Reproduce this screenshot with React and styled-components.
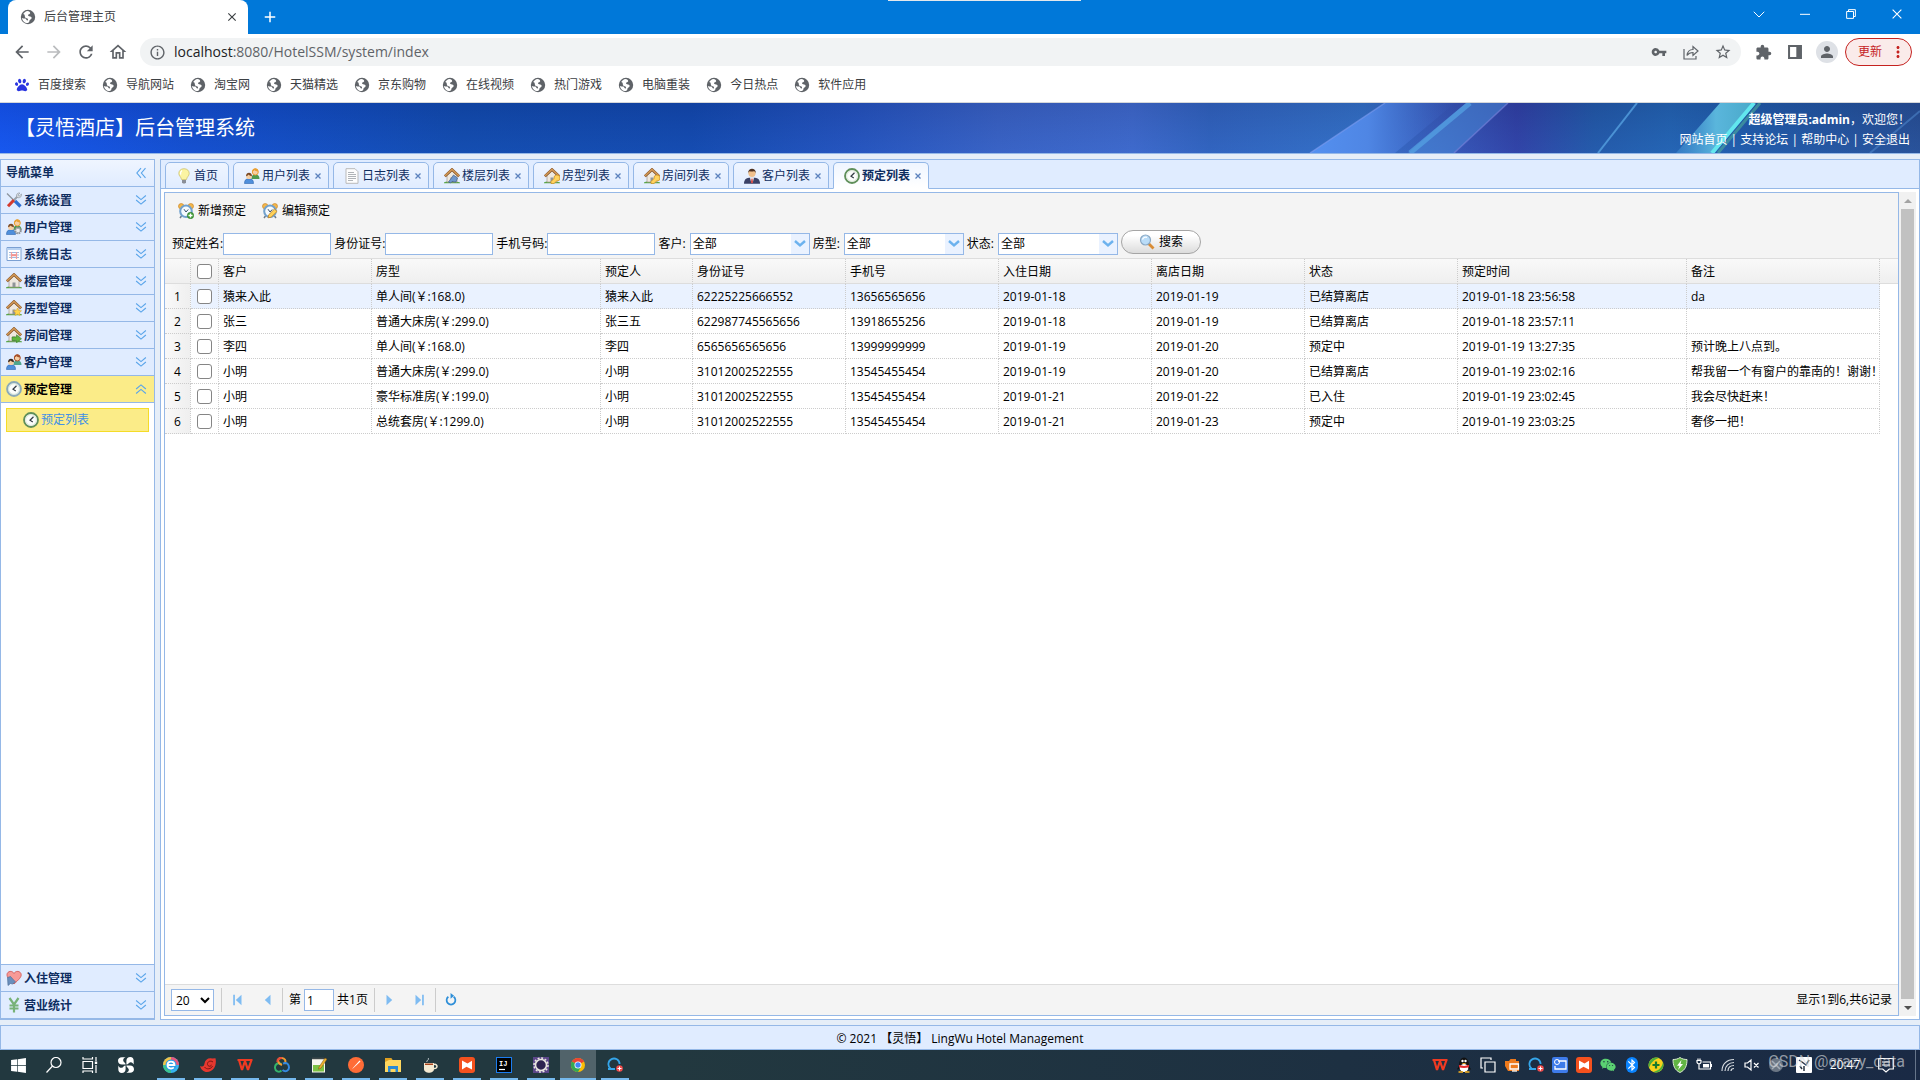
import React, { useState } from 'react';
import styled, { createGlobalStyle } from 'styled-components';
import {
  MdArrowBack, MdArrowForward, MdRefresh, MdOutlineHome, MdInfoOutline, MdVpnKey,
  MdStarBorder, MdExtension, MdPerson, MdMoreVert, MdBluetooth, MdAdd, MdClose
} from 'react-icons/md';
import { FaWindows, FaPaw, FaWeixin } from 'react-icons/fa';

const line = '#95b8e7'
const sky = '#e0ecff'

const GlobalStyle = createGlobalStyle`
  * {
    box-sizing: border-box;
  }
  body {
    margin: 0;
    background: #e6eef8;
    color: #000;
    font: 12px/16px 'Open Sans', 'Noto Sans CJK SC', sans-serif;
  }
  button, input, select {
    margin: 0;
    padding: 0;
    border: 0;
    background: none;
    color: inherit;
    font: inherit;
  }
  a {
    color: inherit;
    text-decoration: none;
  }
  svg {
    display: block;
    flex: none;
  }
`

const Page = styled.div`
  display: flex;
  flex-direction: column;
  min-height: 100vh;
  overflow: hidden;
`

/* browser window */
const TitleBar = styled.div`
  position: relative;
  display: flex;
  height: 34px;
  padding-left: 8px;
  background: #0078d9;
  color: #fff;
`
const DragHandle = styled.div`
  position: absolute;
  top: 0;
  left: 888px;
  width: 193px;
  height: 1px;
  background: #e4e8ec;
`
const BrowserTab = styled.div`
  display: flex;
  align-items: center;
  gap: 8px;
  width: 240px;
  padding: 0 8px 6px 12px;
  height: 40px;
  border-radius: 8px 8px 0 0;
  background: #fff;
  color: #3c4043;
`
const TabTitle = styled.span`
  flex: 1;
`
const IconButton = styled.button`
  display: flex;
  align-items: center;
  justify-content: center;
  width: ${props => props.$size || 16}px;
  height: ${props => props.$size || 16}px;
  color: ${props => props.$color || 'inherit'};
`
const NewTab = styled(IconButton)`
  margin: 5px 0 0 10px;
`
const WindowButtons = styled.div`
  display: flex;
  margin-left: auto;
`
const WindowButton = styled.button`
  display: flex;
  align-items: center;
  justify-content: center;
  width: 46px;
  height: 28px;
`
const AddressRow = styled.div`
  position: relative;
  display: flex;
  align-items: center;
  height: 36px;
  padding: 0 8px 0 6px;
  background: #fff;
  color: #5f6368;
`
const NavButtons = styled.div`
  display: flex;
  width: 134px;
`
const Omnibox = styled.div`
  display: flex;
  flex: 1;
  align-items: center;
  gap: 8px;
  height: 28px;
  padding: 0 6px 0 9px;
  border-radius: 14px;
  background: #f1f3f4;
`
const Url = styled.div`
  flex: 1;
  font-size: 14px;
  line-height: 20px;

  b {
    color: #202124;
    font-weight: 400;
  }
`
const BrowserTools = styled.div`
  display: flex;
  align-items: center;
  gap: 10px;
  padding: 0 7px 0 11px;
`
const Avatar = styled(IconButton)`
  border-radius: 50%;
  background: #dee1e6;
`
const UpdateButton = styled.button`
  display: flex;
  align-items: center;
  justify-content: space-between;
  width: 67px;
  height: 28px;
  padding: 0 4px 0 12px;
  border: 1px solid #c5221f;
  border-radius: 14px;
  background: #faebea;
  color: #c5221f;
`
const Bookmarks = styled.nav`
  display: flex;
  gap: 16px;
  height: 33px;
  padding: 6px 14px 0;
  border-bottom: 1px solid #d5d7da;
  background: #fff;
  color: #3c4043;
`
const Bookmark = styled.a`
  display: flex;
  align-items: center;
  gap: 8px;
  height: 18px;
`

/* banner */
const Banner = styled.header`
  position: relative;
  display: flex;
  align-items: center;
  justify-content: space-between;
  height: 51px;
  padding: 0 10px 0 15px;
  border-bottom: 1px solid ${line};
  background: #1448b8;
  color: #fff;
`
const BannerArt = styled.svg`
  position: absolute;
  inset: 0;
  width: 100%;
  height: 100%;
`
const SiteTitle = styled.h1`
  position: relative;
  margin: 0;
  font-size: 20px;
  font-weight: 400;
  line-height: 28px;
`
const UserBox = styled.div`
  position: relative;
  padding-top: 4px;
  line-height: 20px;
  text-align: right;
`

/* layout */
const Main = styled.main`
  display: flex;
  flex: 1;
  gap: 5px;
  padding: 5px 0;
`
const Sidebar = styled.aside`
  display: flex;
  flex-direction: column;
  width: 155px;
  border: 1px solid ${line};
  background: #fff;
`
const PanelTitle = styled.div`
  display: flex;
  align-items: center;
  justify-content: space-between;
  height: 27px;
  padding: 0 7px 0 5px;
  border-bottom: 1px solid ${line};
  background: linear-gradient(#eff5ff, ${sky});
  color: #0e2d5f;
  font-weight: 700;
`
const MenuHead = styled.button`
  display: flex;
  align-items: center;
  gap: 2px;
  height: 27px;
  padding: 0 7px 0 5px;
  border-bottom: 1px solid ${line};
  background: ${props => props.$open ? '#fbec88' : sky};
  color: ${props => props.$open ? '#000' : '#0e2d5f'};
  font-weight: 700;
  text-align: left;
`
const MenuTitle = styled.span`
  flex: 1;
  padding-top: 2px;
`
const MenuBody = styled.div`
  flex: 1;
  padding: 5px;
  border-bottom: 1px solid ${line};
`
const MenuLink = styled.a`
  display: flex;
  align-items: center;
  gap: 2px;
  height: 24px;
  padding-left: 16px;
  border: 1px solid #f5dc28;
  background: #fbec88;
  color: #4291e6;
`
const Center = styled.section`
  display: flex;
  flex: 1;
  flex-direction: column;
  min-width: 0;
  border: 1px solid ${line};
  background: #fff;
`
const TabStrip = styled.div`
  display: flex;
  gap: 4px;
  height: 29px;
  padding: 2px 4px 0;
  border-bottom: 1px solid ${line};
  background: ${sky};
`
const Tab = styled.div`
  display: flex;
  align-items: center;
  height: 27px;
  padding: 0 ${props => props.$closable ? 2 : 10}px 0 10px;
  border: 1px solid ${line};
  border-bottom-color: ${props => props.$active ? '#fff' : line};
  border-radius: 5px 5px 0 0;
  background: linear-gradient(#eff5ff, ${props => props.$active ? '#fff' : sky});
  color: #0e2d5f;
  font-weight: ${props => props.$active ? 700 : 400};
`
const TabButton = styled.button`
  display: flex;
  align-items: center;
  gap: 2px;
`
const TabBody = styled.div`
  display: flex;
  flex: 1;
  padding: 3px;
`
const DataPanel = styled.div`
  display: flex;
  flex: 1;
  flex-direction: column;
  min-width: 0;
  border: 1px solid ${line};
`
const Toolbar = styled.div`
  height: 66px;
  border-bottom: 1px solid #ddd;
  background: #f4f4f4;
`
const ActionRow = styled.div`
  display: flex;
  gap: 16px;
  padding: 10px 13px 0;
`
const ActionButton = styled.button`
  display: flex;
  align-items: center;
  gap: 4px;
`
const Filters = styled.form`
  display: flex;
  align-items: flex-end;
  gap: 3px;
  height: 36px;
  padding: 0 7px;
`
const Field = styled.label`
  display: flex;
  align-items: center;
  gap: ${props => props.$gap || 0}px;
`
const TextBox = styled.input`
  width: ${props => props.$width || 108}px;
  height: 22px;
  padding: 0 2px;
  border: 1px solid ${line};
  background: #fff;
`
const ComboWrap = styled.span`
  position: relative;
  display: block;
`
const Combo = styled.select`
  display: block;
  width: 120px;
  height: 22px;
  padding: 0 20px 0 2px;
  border: 1px solid ${line};
  border-radius: 0;
  background: linear-gradient(90deg, #fff 100px, #eaf2ff 100px);
  appearance: none;
`
const ComboArrow = styled.svg`
  position: absolute;
  top: 6px;
  right: 4px;
  pointer-events: none;
`
const SearchButton = styled.button`
  display: flex;
  align-items: center;
  gap: 4px;
  height: 24px;
  margin-bottom: 1px;
  padding: 0 17px;
  border: 1px solid #a5a5a5;
  border-radius: 12px;
  background: linear-gradient(#fff 20%, #dcdcdc);
`
const GridArea = styled.div`
  flex: 1;
  overflow: hidden;
`
const Grid = styled.table`
  width: 100%;
  border-collapse: separate;
  border-spacing: 0;
  table-layout: fixed;

  th, td {
    height: 25px;
    padding: 2px 4px 0;
    border-right: 1px dotted #ccc;
    border-bottom: 1px dotted #ccc;
    font-weight: 400;
    text-align: left;
    white-space: nowrap;
  }
  th {
    border-bottom: 1px solid #ddd;
    background: linear-gradient(#f9f9f9, #efefef);
  }
  th:nth-child(2), td:nth-child(2) {
    padding: 0 6px;
  }
  th:last-child {
    border-right: 0;
  }
  td:last-child {
    border: 0;
    background: #fff;
  }
`
const Row = styled.tr`
  background: ${props => props.$hover ? '#eaf2ff' : '#fff'};
`
const NumberCell = styled.td`
  && {
    padding: 2px 0 0;
    background: linear-gradient(90deg, #f9f9f9, #efefef);
    text-align: center;
  }
`
const Check = styled.input`
  display: block;
  width: 15px;
  height: 15px;
  border: 1px solid #858585;
  border-radius: 3px;
  background: #fff;
  appearance: none;

  &:checked {
    background: #0075ff;
  }
`
const Pager = styled.div`
  display: flex;
  align-items: center;
  height: 31px;
  padding: 0 6px;
  border-top: 1px solid #ddd;
  background: #f4f4f4;
`
const PageSize = styled.select`
  width: 43px;
  height: 22px;
  margin-right: 6px;
  border: 1px solid ${line};
  background: #fff;
`
const Divider = styled.i`
  width: 1px;
  height: 24px;
  margin: 0 1px;
  background: #ccc;
`
const PagerButton = styled.button`
  display: flex;
  align-items: center;
  justify-content: center;
  width: 27px;
  height: 22px;
  margin: 0 1px;
`
const PageField = styled.label`
  display: flex;
  align-items: center;
  gap: 3px;
  padding: 0 5px;
`
const PageInfo = styled.span`
  margin-left: auto;
`
const ScrollBar = styled.div`
  display: flex;
  flex-direction: column;
  align-items: center;
  width: 17px;
  background: #f1f1f1;
`
const ScrollArrow = styled.button`
  display: flex;
  align-items: center;
  justify-content: center;
  width: 17px;
  height: 17px;
`
const Thumb = styled.div`
  flex: 1;
  width: 13px;
  background: #c1c1c1;
`
const Footer = styled.footer`
  height: 25px;
  padding-top: 1px;
  border: 1px solid ${line};
  background: ${sky};
  line-height: 24px;
  text-align: center;
`

/* desktop */
const Taskbar = styled.div`
  position: relative;
  display: flex;
  align-items: center;
  height: 30px;
  background: linear-gradient(90deg, #22383f, #22383f 35%, #1d3042 70%, #1a2a45);
  color: #fff;
`
const SystemButton = styled.button`
  display: flex;
  align-items: center;
  justify-content: center;
  width: 36px;
  height: 30px;
`
const Apps = styled.div`
  display: flex;
  gap: 1px;
  margin-left: 9px;
`
const AppButton = styled.button`
  display: flex;
  flex-direction: column;
  align-items: center;
  justify-content: space-between;
  width: 36px;
  height: 30px;
  padding-top: 7px;
  background: ${props => props.$active ? '#51636a' : 'none'};

  &::after {
    content: '';
    width: ${props => props.$active ? 36 : 28}px;
    height: 2px;
    background: #76b9ed;
  }
`
const Tray = styled.div`
  display: flex;
  align-items: center;
  height: 30px;
  margin-left: auto;
  padding-right: 4px;
`
const TrayIcon = styled.button`
  display: flex;
  align-items: center;
  justify-content: center;
  width: ${props => props.$wide ? 32 : 24}px;
  height: 30px;
`
const Clock = styled.span`
  width: 50px;
  text-align: center;
`
const DesktopEdge = styled.i`
  width: 1px;
  height: 30px;
  margin-left: 13px;
  background: #66758a;
`
const Watermark = styled.span`
  position: absolute;
  right: 15px;
  top: 2px;
  color: rgba(215, 218, 222, 0.65);
  font: 16px/20px Roboto, sans-serif;
  pointer-events: none;
`

const Svg = ({ size = 16, children, ...rest }) => (
  <svg width={size} height={size} viewBox="0 0 16 16" fill="none" aria-hidden="true" {...rest}>{children}</svg>
)

const Globe = () => (
  <Svg>
    <circle cx="8" cy="8" r="7.2" fill="#5f6368" />
    <path d="M7.5 1.9C9 2 10.4 3 10.2 4.3 10 5.4 8.3 5 8 6.1 7.8 7 9 7.300 10 7.500c1.500.200 2 1.200 1.400 2.200-.700 1-2 1-2 2.300 0 1-.700 1.800-1.700 2.100C4.400 13.900 2.300 11.500 2 8.900c1 .600 2.300.500 3.200.700 1.300.200.800 1.700 2 2 .800.100.900-1 .700-1.700-.400-1-1.900-.700-2.700-1.500-.700-.800-.200-2.100-.900-2.800-.300-.300-.800-.300-1.100-.500C4.200 3.300 5.700 2.100 7.500 1.900z" fill="#fff" />
  </Svg>
)

const House = ({ badge }) => (
  <Svg>
    <path d="M0 14.500c2-1.500 4-1 8-1s6 0 8 1v.700H0z" fill="#5aa447" />
    <path d="M3 7.500 8 3l5 4.500V14H3z" fill="#eee8df" stroke="#a39a8c" strokeWidth=".7" />
    <path d="M6.500 9.500h3V14h-3z" fill="#8f9499" />
    <path d="M.8 8.300 8 1.600l7.200 6.700" stroke="#8a572a" strokeWidth="2.800" />
    <path d="M.9 8 8 1.500 15.100 8" stroke="#d39a57" strokeWidth="1.500" />
    {badge === 'star' && <path d="m11.500 8 1.200 2.500 2.800.300-2 1.900.500 2.800-2.500-1.300-2.500 1.300.500-2.800-2-1.900 2.800-.300z" fill="#ffd54a" stroke="#dca11c" strokeWidth=".5" />}
    {badge === 'arrow' && <path d="M6 10h4.500V7.800l5 4-5 4v-2.300H6z" fill="#5fb53f" stroke="#3b7d27" strokeWidth=".6" />}
    {badge === 'key' && <path d="M7 13.500 10 10.500a3 3 0 1 1 2.700 2.500L10 15.500H7z" fill="#ffd25c" stroke="#c98b1b" strokeWidth=".7" />}
    {badge === 'floor' && <path d="m4.500 14 5-7 4 3-1.500 4-4-.5-1.500 1.500z" fill="#6f97cc" stroke="#34547f" strokeWidth=".6" />}
  </Svg>
)

const People = ({ left = '#7a4a26', right = '#e9a034', cloth = '#4f9a4d', gear }) => (
  <Svg>
    <path d="M7.500 11c0-3.500 1.200-4.500 4-4.500s4 1.500 4 4.500z" fill={cloth} />
    <circle cx="11.300" cy="4" r="3" fill="#f6cfa3" stroke={right} strokeWidth="1" />
    <path d="M8.300 3.600c0-4.400 6-4.400 6 0-2-.2-3.500-.7-4-1.500-.3 1-1 1.300-2 1.500z" fill={right} />
    <path d="M.5 15.500c0-3.500 1.500-4.800 4.500-4.800s4.500 1.300 4.500 4.800z" fill="#4f8fdc" stroke="#2f66ae" strokeWidth=".6" />
    <circle cx="5" cy="8.300" r="2.800" fill="#f6cfa3" />
    <path d="M2 8.200c0-4.600 6-4.600 6 0-1.500-.200-3-.700-3.600-1.600-.5 1-1.400 1.500-2.400 1.600z" fill={left} />
    {gear && <circle cx="12" cy="11.500" r="2.800" fill="#eee" stroke="#8b9096" strokeWidth="2" strokeDasharray="1.600 .6" />}
  </Svg>
)

const Clock16 = ({ ring = '#5f8f5a', face = '#fff', children }) => (
  <Svg>
    <circle cx="8" cy="8" r="7" fill={face} stroke={ring} strokeWidth="1.800" />
    <circle cx="8" cy="8" r="5.400" fill="#fbfdfb" stroke="#c4d6c0" strokeWidth=".6" />
    <path d="M10.500 4.800 7 8.200l2.800 1.700" stroke="#333c44" strokeWidth="1.200" />
    {children}
  </Svg>
)

const Alarm = ({ mode }) => (
  <Svg>
    <circle cx="3.200" cy="3.200" r="2.700" fill="#f4b74c" stroke="#c57f1e" strokeWidth=".6" />
    <circle cx="12.800" cy="3.200" r="2.700" fill="#f4b74c" stroke="#c57f1e" strokeWidth=".6" />
    <path d="m3.500 13-1.500 2m10.500-2 1.500 2" stroke="#6c7a88" strokeWidth="1.500" />
    <circle cx="8" cy="8.300" r="5.800" fill="#f5fafe" stroke="#71a1cd" strokeWidth="2" />
    <path d="m6 6.200 2 2.800 2.200-2.500" stroke="#37516c" strokeWidth="1" />
    {mode === 'add'
      ? <g><circle cx="12.500" cy="12.500" r="3.200" fill="#43a13a" stroke="#236c1e" strokeWidth=".5" /><path d="M12.500 10.500v4m-2-2h4" stroke="#fff" strokeWidth="1.300" /></g>
      : <path d="m6 14.800.7-3L12.500 6l2.600 2.400-6 5.800z" fill="#ffd257" stroke="#b97e24" strokeWidth=".8" />}
  </Svg>
)

const Bulb = () => (
  <Svg>
    <path d="M8 .7c-3.400 0-5.200 2.300-5.200 4.800C2.800 8 5.300 9 5.500 11.500h5C10.700 9 13.200 8 13.200 5.500 13.200 3 11.400.7 8 .7z" fill="#fbf4a2" stroke="#c9bc62" strokeWidth=".7" />
    <path d="M6 2.600c-1.200.8-1.700 2.500-1.300 4" stroke="#fff" strokeWidth="1.200" />
    <path d="M6 12h4v2.500l-1 1H7l-1-1z" fill="#8a8f98" />
  </Svg>
)

const Tools = () => (
  <Svg>
    <path d="m1 1.500 8 8" stroke="#8b939c" strokeWidth="1.300" />
    <path d="m9 9 5.500 5.500" stroke="#2e6fd2" strokeWidth="3.200" />
    <path d="m2 14.300 6-6.300" stroke="#d43b2e" strokeWidth="3" />
    <path d="m8 8 3.500-3.500" stroke="#9aa2ab" strokeWidth="2" />
    <path d="M10.500 4.500C10 2 12 .500 14 1l-2 2 1 1.200L15.500 2c.7 2-1 4-3.500 3.800z" fill="#d4d9de" stroke="#8b939c" strokeWidth=".6" />
  </Svg>
)

const Calendar = () => (
  <Svg>
    <path d="M1 1.500h14v13H1z" fill="#fff" stroke="#7ba0d3" />
    <path d="M1.500 2h13v2h-13z" fill="#b8d2f2" />
    <path d="M3 6.500h10M3 9h10M3 11.500h10" stroke="#9cbbe2" strokeWidth="1.200" />
    <path d="M5.500 6v7m5-7v7" stroke="#f0a09d" strokeWidth="1.200" />
    <path d="M5.500 8.200h5v2h-5z" fill="#f5928e" />
  </Svg>
)

const Doc = () => (
  <Svg>
    <path d="M2 .7h9l3 3v11.600H2z" fill="#fdfdfd" stroke="#b9b9b9" />
    <path d="M4 4.500h6M4 6.500h8M4 8.500h8M4 10.500h8M4 12.500h5" stroke="#a7abb0" strokeWidth=".9" />
  </Svg>
)

const Businessman = () => (
  <Svg>
    <path d="M0 15.700c0-4 2-5.700 5-6h6c3 .3 5 2 5 6z" fill="#3a4166" />
    <path d="M6 9.500h4L8.700 15H7.300z" fill="#fff" />
    <path d="M7.500 10.500h1l.5 4-1 1-1-1z" fill="#cf3a34" />
    <circle cx="8" cy="5.300" r="3.600" fill="#f0c08c" />
    <path d="M4.200 5.300C3.500-.8 12.500-.8 11.800 5.300c-.5-1.500-1.300-2-2-2-1.500.4-3 .3-4 0-.8.200-1.300 1-1.600 2z" fill="#4d3120" />
  </Svg>
)

const Hearts = () => (
  <Svg>
    <path d="M8 14C3 9.500.8 7 1 4.500 1.300.8 6.500.300 8 3.500c1.500-3.200 6.800-2.700 7.200 1C15.500 7 13 9.500 8 14z" fill="#f79a97" stroke="#d1504d" strokeWidth=".8" />
    <path d="m2 15.500-.5-8 3-1 5 5.500-3 2-2-.5z" fill="#6b8fbd" stroke="#456993" strokeWidth=".6" />
  </Svg>
)

const Yen = () => (
  <Svg><path d="m3.500 1 4.500 6.500L12.500 1M8 7v8.500M3.500 8.500h9M3.500 11.500h9" stroke="#77b277" strokeWidth="2.200" /></Svg>
)

const Magnifier = () => (
  <Svg>
    <path d="m9.500 9.500 5 5" stroke="#d98c35" strokeWidth="2.800" />
    <circle cx="6.500" cy="6" r="5" fill="#b9dcf8" stroke="#8ba9c4" strokeWidth="1.200" />
    <path d="M3.500 5.500C4 3.500 6 2.800 8 3.400" stroke="#fff" strokeWidth="1.200" />
  </Svg>
)

const Chevrons = ({ turn = 0 }) => (
  <Svg size={12} stroke="#5aa5ea" strokeWidth="1.500">
    <path transform={`rotate(${turn} 8 8)`} d="m1.500 2 6.500 5.500L14.500 2m-13 6L8 13.500 14.500 8" />
  </Svg>
)

const Cross = () => (
  <Svg size={16}><path d="m5.500 5.500 5 5m0-5-5 5" stroke="#5c82bd" strokeWidth="1.300" /></Svg>
)

const menus = [
  { title: '系统设置', icon: <Tools /> },
  { title: '用户管理', icon: <People gear /> },
  { title: '系统日志', icon: <Calendar /> },
  { title: '楼层管理', icon: <House /> },
  { title: '房型管理', icon: <House badge="star" /> },
  { title: '房间管理', icon: <House badge="arrow" /> },
  { title: '客户管理', icon: <People left="#3a2a20" right="#a8512a" cloth="#4fa58d" /> },
  { title: '预定管理', icon: <Clock16 ring="#8aa9b8" face="#dceaf5" />, items: ['预定列表'] },
  { title: '入住管理', icon: <Hearts /> },
  { title: '营业统计', icon: <Yen /> }
]

const tabs = [
  { title: '首页', icon: <Bulb />, fixed: true },
  { title: '用户列表', icon: <People /> },
  { title: '日志列表', icon: <Doc /> },
  { title: '楼层列表', icon: <House badge="floor" /> },
  { title: '房型列表', icon: <House badge="key" /> },
  { title: '房间列表', icon: <House badge="key" /> },
  { title: '客户列表', icon: <Businessman /> },
  { title: '预定列表', icon: <Clock16 /> }
]

const columns = [
  ['客户', 153], ['房型', 229], ['预定人', 92], ['身份证号', 153], ['手机号', 153], ['入住日期', 153],
  ['离店日期', 153], ['状态', 153], ['预定时间', 229], ['备注', 193]
]

const rows = [
  ['猿来入此', '单人间(￥:168.0)', '猿来入此', '62225225666552', '13656565656', '2019-01-18', '2019-01-19', '已结算离店', '2019-01-18 23:56:58', 'da'],
  ['张三', '普通大床房(￥:299.0)', '张三五', '622987745565656', '13918655256', '2019-01-18', '2019-01-19', '已结算离店', '2019-01-18 23:57:11', ''],
  ['李四', '单人间(￥:168.0)', '李四', '6565656565656', '13999999999', '2019-01-19', '2019-01-20', '预定中', '2019-01-19 13:27:35', '预计晚上八点到。'],
  ['小明', '普通大床房(￥:299.0)', '小明', '31012002522555', '13545455454', '2019-01-19', '2019-01-20', '已结算离店', '2019-01-19 23:02:16', '帮我留一个有窗户的靠南的！谢谢！'],
  ['小明', '豪华标准房(￥:199.0)', '小明', '31012002522555', '13545455454', '2019-01-21', '2019-01-22', '已入住', '2019-01-19 23:02:45', '我会尽快赶来！'],
  ['小明', '总统套房(￥:1299.0)', '小明', '31012002522555', '13545455454', '2019-01-21', '2019-01-23', '预定中', '2019-01-19 23:03:25', '奢侈一把！']
]

const bookmarks = ['百度搜索', '导航网站', '淘宝网', '天猫精选', '京东购物', '在线视频', '热门游戏', '电脑重装', '今日热点', '软件应用']

function Browser() {
  return (
    <>
      <TitleBar>
        <BrowserTab>
          <Globe />
          <TabTitle>后台管理主页</TabTitle>
          <IconButton aria-label="close tab"><MdClose size={14} /></IconButton>
        </BrowserTab>
        <NewTab $size={24} aria-label="new tab"><MdAdd size={18} /></NewTab>
        <DragHandle />
        <WindowButtons>
          <WindowButton aria-label="search tabs"><Svg size={12}><path d="m1 5 7 7 7-7" stroke="#fff" strokeWidth="1.300" /></Svg></WindowButton>
          <WindowButton aria-label="minimize"><Svg size={10}><path d="M0 8.500h16" stroke="#fff" strokeWidth="1.600" /></Svg></WindowButton>
          <WindowButton aria-label="restore"><Svg size={10}><path d="M1 4h11v11H1zM4 4V1h11v11h-3" stroke="#fff" strokeWidth="1.600" /></Svg></WindowButton>
          <WindowButton aria-label="close"><Svg size={10}><path d="m1 1 14 14m0-14L1 15" stroke="#fff" strokeWidth="1.800" /></Svg></WindowButton>
        </WindowButtons>
      </TitleBar>
      <AddressRow>
        <NavButtons>
          <IconButton $size={32} aria-label="back"><MdArrowBack size={20} /></IconButton>
          <IconButton $size={32} $color="#babcbe" aria-label="forward"><MdArrowForward size={20} /></IconButton>
          <IconButton $size={32} aria-label="reload"><MdRefresh size={20} /></IconButton>
          <IconButton $size={32} aria-label="home"><MdOutlineHome size={20} /></IconButton>
        </NavButtons>
        <Omnibox>
          <MdInfoOutline size={17} />
          <Url><b>localhost</b>:8080/HotelSSM/system/index</Url>
          <IconButton $size={24} aria-label="passwords"><MdVpnKey size={16} /></IconButton>
          <IconButton $size={24} aria-label="share">
            <Svg><path d="M1 5v10h12v-3M4 11.500C4.500 7.500 7 5.500 10 5.500V2.500l5 4.500-5 4.500V8.500c-3 0-4.500.8-6 3z" stroke="#5f6368" strokeWidth="1.200" /></Svg>
          </IconButton>
          <IconButton $size={24} aria-label="bookmark"><MdStarBorder size={18} /></IconButton>
        </Omnibox>
        <BrowserTools>
          <IconButton $size={22} aria-label="extensions"><MdExtension size={17} /></IconButton>
          <IconButton $size={22} aria-label="side panel"><Svg size={14}><path d="M1.200 1.200h13.600v13.600H1.200z" stroke="#5f6368" strokeWidth="2.300" /><path d="M9.500 1h5.500v14H9.500z" fill="#5f6368" /></Svg></IconButton>
          <Avatar $size={22} aria-label="profile"><MdPerson size={18} /></Avatar>
        </BrowserTools>
        <UpdateButton>更新<MdMoreVert size={18} /></UpdateButton>
      </AddressRow>
      <Bookmarks>
        {bookmarks.map((name, i) => (
          <Bookmark key={name} href="#">
            {i === 0 ? <Svg><FaPaw size={14} x="1" y="1" color="#2a35e0" /></Svg> : <Globe />}
            {name}
          </Bookmark>
        ))}
      </Bookmarks>
    </>
  )
}

function Header() {
  return (
    <Banner>
      <BannerArt viewBox="0 0 1920 50" preserveAspectRatio="none" aria-hidden="true">
        <defs>
          <linearGradient id="sea">
            <stop offset="0" stopColor="#1452f0" />
            <stop offset=".1" stopColor="#124acc" />
            <stop offset=".24" stopColor="#1147a8" />
            <stop offset=".36" stopColor="#1245a8" />
            <stop offset=".44" stopColor="#244fb8" />
            <stop offset=".52" stopColor="#3c60c0" />
            <stop offset=".59" stopColor="#4268c8" />
            <stop offset=".63" stopColor="#3361b9" />
            <stop offset=".71" stopColor="#3670c2" />
            <stop offset=".75" stopColor="#3b57b4" />
            <stop offset=".79" stopColor="#333c9e" />
            <stop offset=".83" stopColor="#2457a2" />
            <stop offset=".87" stopColor="#2462ac" />
            <stop offset=".91" stopColor="#2159a3" />
            <stop offset="1" stopColor="#294c8d" />
          </linearGradient>
          <linearGradient id="glow" x1="0" y1="0" x2="1" y2="0">
            <stop offset="0" stopColor="#5490f0" />
            <stop offset=".4" stopColor="#4f86e4" />
            <stop offset="1" stopColor="#4065c8" stopOpacity="0" />
          </linearGradient>
          <linearGradient id="cyan" x1="0" y1="0" x2="1" y2="0">
            <stop offset="0" stopColor="#4a9ddc" stopOpacity=".4" />
            <stop offset=".5" stopColor="#5ab6dc" />
            <stop offset="1" stopColor="#48a8c8" />
          </linearGradient>
          <linearGradient id="shade" x1="0" y1="0" x2="0" y2="1">
            <stop offset="0" stopColor="#0b2f7a" stopOpacity=".18" />
            <stop offset="1" stopColor="#2a78e8" stopOpacity=".15" />
          </linearGradient>
        </defs>
        <path d="M0 0h1920v50H0z" fill="url(#sea)" />
        <path d="M0 0h1920v50H0z" fill="url(#shade)" />
        <path d="m1310 50 75-50h70l-60 50z" fill="url(#glow)" />
        <path d="m1310 50 75-50" stroke="#7f9cf0" strokeOpacity=".6" strokeWidth="1.500" />
        <path d="m1408 50 58-50h42l-54 50z" fill="#4b8fdc" fillOpacity=".5" />
        <path d="m1410 50 60-50" stroke="#55a4e4" strokeOpacity=".7" strokeWidth="5" />
        <path d="m1454 50 54-50" stroke="#7b84dc" strokeOpacity=".6" strokeWidth="1.500" />
        <path d="m1598 50 39-50" stroke="#55a0e0" strokeOpacity=".8" strokeWidth="2" />
        <path d="m1676 50 44-50h36l-42 50z" fill="url(#cyan)" />
        <path d="m1712 50 42-50" stroke="#62e6ee" strokeWidth="4" />
        <path d="m1718 50 42-50" stroke="#4fae9c" strokeOpacity=".6" strokeWidth="3" />
        <path d="m1870 50 50-42" stroke="#4d83c8" strokeOpacity=".6" strokeWidth="2" />
      </BannerArt>
      <SiteTitle>【灵悟酒店】后台管理系统</SiteTitle>
      <UserBox>
        <div><b>超级管理员:admin</b>，欢迎您！</div>
        <div>
          <a href="#">网站首页</a> | <a href="#">支持论坛</a> | <a href="#">帮助中心</a> | <a href="#">安全退出</a>
        </div>
      </UserBox>
    </Banner>
  )
}

function Menu() {
  return (
    <Sidebar>
      <PanelTitle>导航菜单<Chevrons turn={90} /></PanelTitle>
      {menus.map(menu => (
        <React.Fragment key={menu.title}>
          <MenuHead $open={!!menu.items}>
            {menu.icon}
            <MenuTitle>{menu.title}</MenuTitle>
            <Chevrons turn={menu.items ? 180 : 0} />
          </MenuHead>
          {menu.items && (
            <MenuBody>
              {menu.items.map(item => <MenuLink key={item} href="#"><Clock16 />{item}</MenuLink>)}
            </MenuBody>
          )}
        </React.Fragment>
      ))}
    </Sidebar>
  )
}

const ComboField = ({ label }) => (
  <Field $gap={4}>
    {label}:
    <ComboWrap>
      <Combo defaultValue="全部"><option>全部</option></Combo>
      <ComboArrow width="12" height="10" viewBox="0 0 12 10" fill="none"><path d="m1 2 5 4.500L11 2" stroke="#6cb2ee" strokeWidth="2.400" /></ComboArrow>
    </ComboWrap>
  </Field>
)

const PageArrow = ({ label, flip, end }) => (
  <PagerButton aria-label={label}>
    <Svg size={14}>
      <g transform={flip ? 'rotate(180 8 8)' : undefined} fill="#7fbcf2">
        <path d="M12 2v12L5.500 8z" />
        {end && <path d="M2.500 2h2v12h-2z" />}
      </g>
    </Svg>
  </PagerButton>
)

function BookingList() {
  const [page, setPage] = useState('1')

  return (
    <DataPanel>
      <Toolbar>
        <ActionRow>
          <ActionButton><Alarm mode="add" />新增预定</ActionButton>
          <ActionButton><Alarm mode="edit" />编辑预定</ActionButton>
        </ActionRow>
        <Filters onSubmit={e => e.preventDefault()}>
          <Field>预定姓名:<TextBox /></Field>
          <Field>身份证号:<TextBox /></Field>
          <Field>手机号码:<TextBox /></Field>
          <ComboField label="客户" />
          <ComboField label="房型" />
          <ComboField label="状态" />
          <SearchButton><Magnifier />搜索</SearchButton>
        </Filters>
      </Toolbar>
      <GridArea>
        <Grid>
          <colgroup>
            <col width="26" />
            <col width="28" />
            {columns.map(([name, width]) => <col key={name} width={width} />)}
            <col />
          </colgroup>
          <thead>
            <tr>
              <th />
              <th><Check type="checkbox" aria-label="全选" /></th>
              {columns.map(([name]) => <th key={name}>{name}</th>)}
              <th />
            </tr>
          </thead>
          <tbody>
            {rows.map((row, i) => (
              <Row key={i} $hover={i === 0}>
                <NumberCell>{i + 1}</NumberCell>
                <td><Check type="checkbox" aria-label={row[0]} /></td>
                {row.map((cell, j) => <td key={j}>{cell}</td>)}
                <td />
              </Row>
            ))}
          </tbody>
        </Grid>
      </GridArea>
      <Pager>
        <PageSize aria-label="每页" defaultValue="20"><option>20</option></PageSize>
        <Divider />
        <PageArrow label="first" end />
        <PageArrow label="prev" />
        <Divider />
        <PageField>
          第<TextBox $width={30} value={page} onChange={e => setPage(e.target.value)} />共1页
        </PageField>
        <Divider />
        <PageArrow label="next" flip />
        <PageArrow label="last" flip end />
        <Divider />
        <PagerButton aria-label="refresh">
          <Svg size={14}><path d="M5 4.200A5 5 0 1 0 11 4.200" stroke="#2f8fd8" strokeWidth="2" /><path d="M7.500 0v6.500L11.500 3z" fill="#2f8fd8" /></Svg>
        </PagerButton>
        <PageInfo>显示1到6,共6记录</PageInfo>
      </Pager>
    </DataPanel>
  )
}

const Wps = () => <Svg><path d="M.5 3h15M2 3l3 10 3-9 3 9 3.500-10" stroke="#f03a22" strokeWidth="2.200" strokeLinejoin="bevel" /></Svg>
const Ribbon = () => (
  <Svg>
    <rect width="16" height="16" rx="3" fill="#f4511e" />
    <path d="m3 3.500 5.500 3L13 3.800v8.700L7.500 9.800 3 12.500z" fill="#fff" />
  </Svg>
)
const Bubble = () => (
  <Svg>
    <path d="M3.500 11.500A5.600 5.600 0 1 1 12.600 7M1 12h7" stroke="#35a6ea" strokeWidth="1.800" />
    <circle cx="12.500" cy="11.500" r="3.300" fill="#ef4b4b" />
    <path d="M12.500 9.500v4m-2-2h4" stroke="#fff" strokeWidth="1" />
  </Svg>
)

const apps = [
  <Svg><circle cx="8" cy="8" r="8" fill="#36b4ee" /><path d="M8 0a8 8 0 0 1 8 8H8z" fill="#e8567c" /><path d="M8 0a8 8 0 0 0-8 8h8z" fill="#f3c244" /><path d="M0 8a8 8 0 0 0 8 8V8z" fill="#3cc48a" /><circle cx="8" cy="8" r="5.500" fill="#2b9ce8" /><path d="M4.500 8h7c0-4.500-7-4.500-7 0 0 4 4.500 4.200 6.300 2.300" stroke="#fff" strokeWidth="1.800" /></Svg>,
  <Svg><path d="M0 9c3 1.500 4 0 4.500-2.500C5 2.500 8.500.5 12 1.500l3.500-.3C17 8 14 15 7 15c-3.500 0-6-2.500-7-6z" fill="#e5382f" /><path d="M13 5c-2.500-2-6-.5-5.500 2.500.5 2.500 4 2.200 3.800.200M4.500 10c2 3 7 2 8-1" stroke="#7e1815" strokeWidth="1" /></Svg>,
  <Wps />,
  <Svg strokeWidth="2"><path d="M7.500 7C3 5 .8 8 1 11s4 5 6.500 2.500" stroke="#35b36b" /><path d="M8 8C3 6 3 1.200 7 1s5.500 3 3.500 6" stroke="#f29a2e" /><path d="M9 6.500c4-1.500 6 1 6 4s-3.500 5-6.500 2.500" stroke="#3489e0" /><path d="M3.500 5C3 2 5.500.8 8 1.200" stroke="#e94b3c" /></Svg>,
  <Svg><path d="M1 2h13v13.500H1z" fill="#f7f7ee" /><path d="M2 8h11v6.500H2z" fill="#7cc243" /><path d="M1.500 1.500h12" stroke="#555" strokeWidth="2" strokeDasharray="1 1" /><path d="m8 10 6-9 2 1.200-6 9-2.500 1z" fill="#eab12e" stroke="#7a4b12" strokeWidth=".5" /></Svg>,
  <Svg><circle cx="8" cy="8" r="8" fill="#ff6c37" /><path d="m4 12 7.500-8.500 1 1L5.500 11z" fill="#fff" /></Svg>,
  <Svg><path d="M0 1h6l1.500 2H16v12H0z" fill="#ffd75e" /><path d="M0 1h6l1.500 2H4L0 5z" fill="#e0a020" /><path d="M3 15V9h10v6h-2.500v-3h-5v3z" fill="#2a8ad4" /></Svg>,
  <Svg><path d="M2 6h10v6c0 5-10 5-10 0z" fill="#f4ead2" /><path d="M12 7.500c4-1 4 4.500 0 4" stroke="#f4ead2" strokeWidth="1.500" /><path d="M3 6.500h8v1.500H3z" fill="#a8441c" /><path d="M5 5c-1-2 3-2 1-4" stroke="#cfd5d8" /></Svg>,
  <Ribbon />,
  <Svg><rect x=".5" y=".5" width="15" height="15" fill="#000" stroke="#1c7df0" /><text x="3" y="9" fill="#fff" fontSize="7" fontWeight="700" fontFamily="Liberation Mono">IJ</text><path d="M3 12.500h6" stroke="#fff" strokeWidth="1.200" /></Svg>,
  <Svg><path d="M0 0h16v16H0z" fill="#5b4689" /><circle cx="8" cy="8" r="5.500" fill="#2e2350" stroke="#e9e6e0" strokeWidth="1.600" /><circle cx="8" cy="8" r="7" stroke="#e9e6e0" strokeWidth="1.500" strokeDasharray="2 1.660" /></Svg>,
  <Svg><circle cx="8" cy="8" r="7" fill="#fbbc04" /><path d="M8 8 1.900 4.500A7 7 0 0 1 14.100 4.500z" fill="#ea4335" /><path d="M8 8 1.900 4.500A7 7 0 0 0 8 15l3-5z" fill="#34a853" /><circle cx="8" cy="8" r="3.500" fill="#fff" /><circle cx="8" cy="8" r="2.700" fill="#4285f4" /></Svg>,
  <Bubble />
]

const tray = [
  <Wps />,
  <Svg><ellipse cx="8" cy="8" rx="5" ry="7.500" fill="#111" /><path d="M1 12.500 4 7h8l3 5.500-3-.5H4z" fill="#111" /><ellipse cx="8" cy="11" rx="4.300" ry="4" fill="#fff" /><path d="M3 7.800c3 1.500 7 1.500 10 0v2.400c-3 1-7 1-10 0z" fill="#e3292c" /><circle cx="6.500" cy="4" r="1.200" fill="#fff" /><circle cx="9.500" cy="4" r="1.200" fill="#fff" /><path d="M5.500 6h5L8 7.300zM2.500 14.200h4.500v1.600H2.500zm6.500 0h4.500v1.600H9z" fill="#f8b21f" /></Svg>,
  <Svg stroke="#fff" strokeWidth="1.200"><path d="M5 5h10v10H5z" /><path d="M3 11H1V1h10v2" /></Svg>,
  <Svg><path d="M1 4h4l1.500-2H12v2h3v10H4L1 9z" fill="#ee7a1c" /><path d="M6 7h8.500v5H6z" fill="#ee7a1c" stroke="#fff" strokeWidth="1.300" /><path d="M8 14h5" stroke="#fff" strokeWidth="1.300" /></Svg>,
  <Bubble />,
  <Svg><rect width="16" height="16" rx="2" fill="#3e7bea" /><path d="M6 4h8v8H3V9" stroke="#fff" strokeWidth="1.300" /><circle cx="5" cy="5" r="2.500" stroke="#fff" /></Svg>,
  <Ribbon />,
  <FaWeixin size={16} color="#5ad172" />,
  <Svg><rect x="2" width="12" height="16" rx="6" fill="#0a84ff" /><MdBluetooth size={14} x="1" y="1" color="#fff" /></Svg>,
  <Svg><circle cx="8" cy="8" r="7.500" fill="#f7d21c" /><path d="M1 11C-1 4 5-1 11 1 7 2 3 5 1 11z" fill="#4cae3c" /><path d="M15 5c2 6-3 12-10 10 5-1 9-4 10-10z" fill="#4cae3c" /><path d="M8 4.500v7M4.500 8h7" stroke="#187a2d" strokeWidth="2.200" /></Svg>,
  <Svg><path d="M8 .5c2 1.500 4.500 2 7 2 0 6-1.500 10.500-7 13-5.500-2.500-7-7-7-13 2.500 0 5-.5 7-2z" fill="#62b443" stroke="#dbead2" /><path d="M9.500 3 5 8.800h2.500L6 13l5-6H8.500z" fill="#fff" /></Svg>,
  <Svg stroke="#fff" strokeWidth="1.200"><path d="M6.500 5H14.500v7H4M15.500 7v3" /><path d="M7 7h6v3.500H7z" fill="#fff" stroke="none" /><path d="M1 3.500V5C1 7.500 5 7.500 5 5V3.500zM2 3.500v-2M4 3.500v-2M3 7v5h1" /></Svg>,
  <Svg stroke="#d5dadf" strokeWidth="1.200"><path d="M2 14C2 7 7 2.500 14 2.500M5 14c0-5 4-8.500 9-8.500M8 14c0-3.500 2.500-5.500 6-5.500M11 14c0-1.500 1-2.500 3-2.500" /></Svg>,
  <Svg stroke="#fff" strokeWidth="1.200"><path d="M1 6h2.500L7 3v10L3.500 10H1zM10 6l4.500 4.500m0-4.500L10 10.500" /></Svg>,
  <Svg><circle cx="8" cy="8" r="7" fill="#6b7684" /><path d="m4 4 8 8m0-8-8 8" stroke="#a5aeb8" strokeWidth="1.500" /></Svg>
]

function DesktopBar() {
  return (
    <Taskbar>
      <SystemButton aria-label="start"><FaWindows size={17} /></SystemButton>
      <SystemButton aria-label="search"><Svg stroke="#fff" strokeWidth="1.200"><circle cx="10" cy="5.500" r="5" /><path d="M6.500 9 .5 15.500" /></Svg></SystemButton>
      <SystemButton aria-label="task view"><Svg stroke="#fff" strokeWidth="1.200"><path d="M1 4.500h9.500v7H1zM1 0v2h9.500V0M1 16v-2h9.500v2M14 0v4m0 4v8" /><path d="M12.800 4.500h2.400V7h-2.400z" fill="#fff" stroke="none" /></Svg></SystemButton>
      <SystemButton aria-label="fan">
        <Svg fill="#fff">
          {[0, 90, 180, 270].map(turn => <path key={turn} transform={`rotate(${turn} 8 8)`} d="M7.600 7.600H4C1.500 7.600 0 6 0 3.800 0 1.500 1.500.3 4 .3h3.600C6 1 5 2 5.200 3.500c.3 2 2.400 2 2.400 4.100z" />)}
        </Svg>
      </SystemButton>
      <Apps>
        {apps.map((icon, i) => <AppButton key={i} $active={i === 11} aria-label={`app ${i + 1}`}>{icon}</AppButton>)}
      </Apps>
      <Tray>
        {tray.map((icon, i) => <TrayIcon key={i} aria-label={`tray ${i + 1}`}>{icon}</TrayIcon>)}
        <TrayIcon $wide aria-label="input method"><Svg><rect width="16" height="16" rx="1" fill="#fff" /><path d="m3 3 3 2 4 3 3-5M8 9v5M4 9l2 3" stroke="#2a3442" strokeWidth="1.500" /></Svg></TrayIcon>
        <Clock>20:47</Clock>
        <TrayIcon $wide aria-label="notifications"><Svg stroke="#fff" strokeWidth="1.200"><path d="M.7 1.500h14.600v10.500h-4L8 15l-3.300-3h-4zM4 5h8M4 8h8" /></Svg></TrayIcon>
        <DesktopEdge />
      </Tray>
      <Watermark>CSDN @crazy_data</Watermark>
    </Taskbar>
  )
}

export default function App() {
  return (
    <Page>
      <GlobalStyle />
      <Browser />
      <Header />
      <Main>
        <Menu />
        <Center>
          <TabStrip>
            {tabs.map((tab, i) => (
              <Tab key={tab.title} $closable={!tab.fixed} $active={i === tabs.length - 1}>
                <TabButton>{tab.icon}{tab.title}</TabButton>
                {!tab.fixed && <IconButton aria-label="close"><Cross /></IconButton>}
              </Tab>
            ))}
          </TabStrip>
          <TabBody>
            <BookingList />
            <ScrollBar>
              <ScrollArrow aria-label="up"><Svg size={8}><path d="m0 12 8-8 8 8z" fill="#a3a3a3" /></Svg></ScrollArrow>
              <Thumb />
              <ScrollArrow aria-label="down"><Svg size={8}><path d="m0 4 8 8 8-8z" fill="#505050" /></Svg></ScrollArrow>
            </ScrollBar>
          </TabBody>
        </Center>
      </Main>
      <Footer>© 2021 【灵悟】 LingWu Hotel Management</Footer>
      <DesktopBar />
    </Page>
  )
}
